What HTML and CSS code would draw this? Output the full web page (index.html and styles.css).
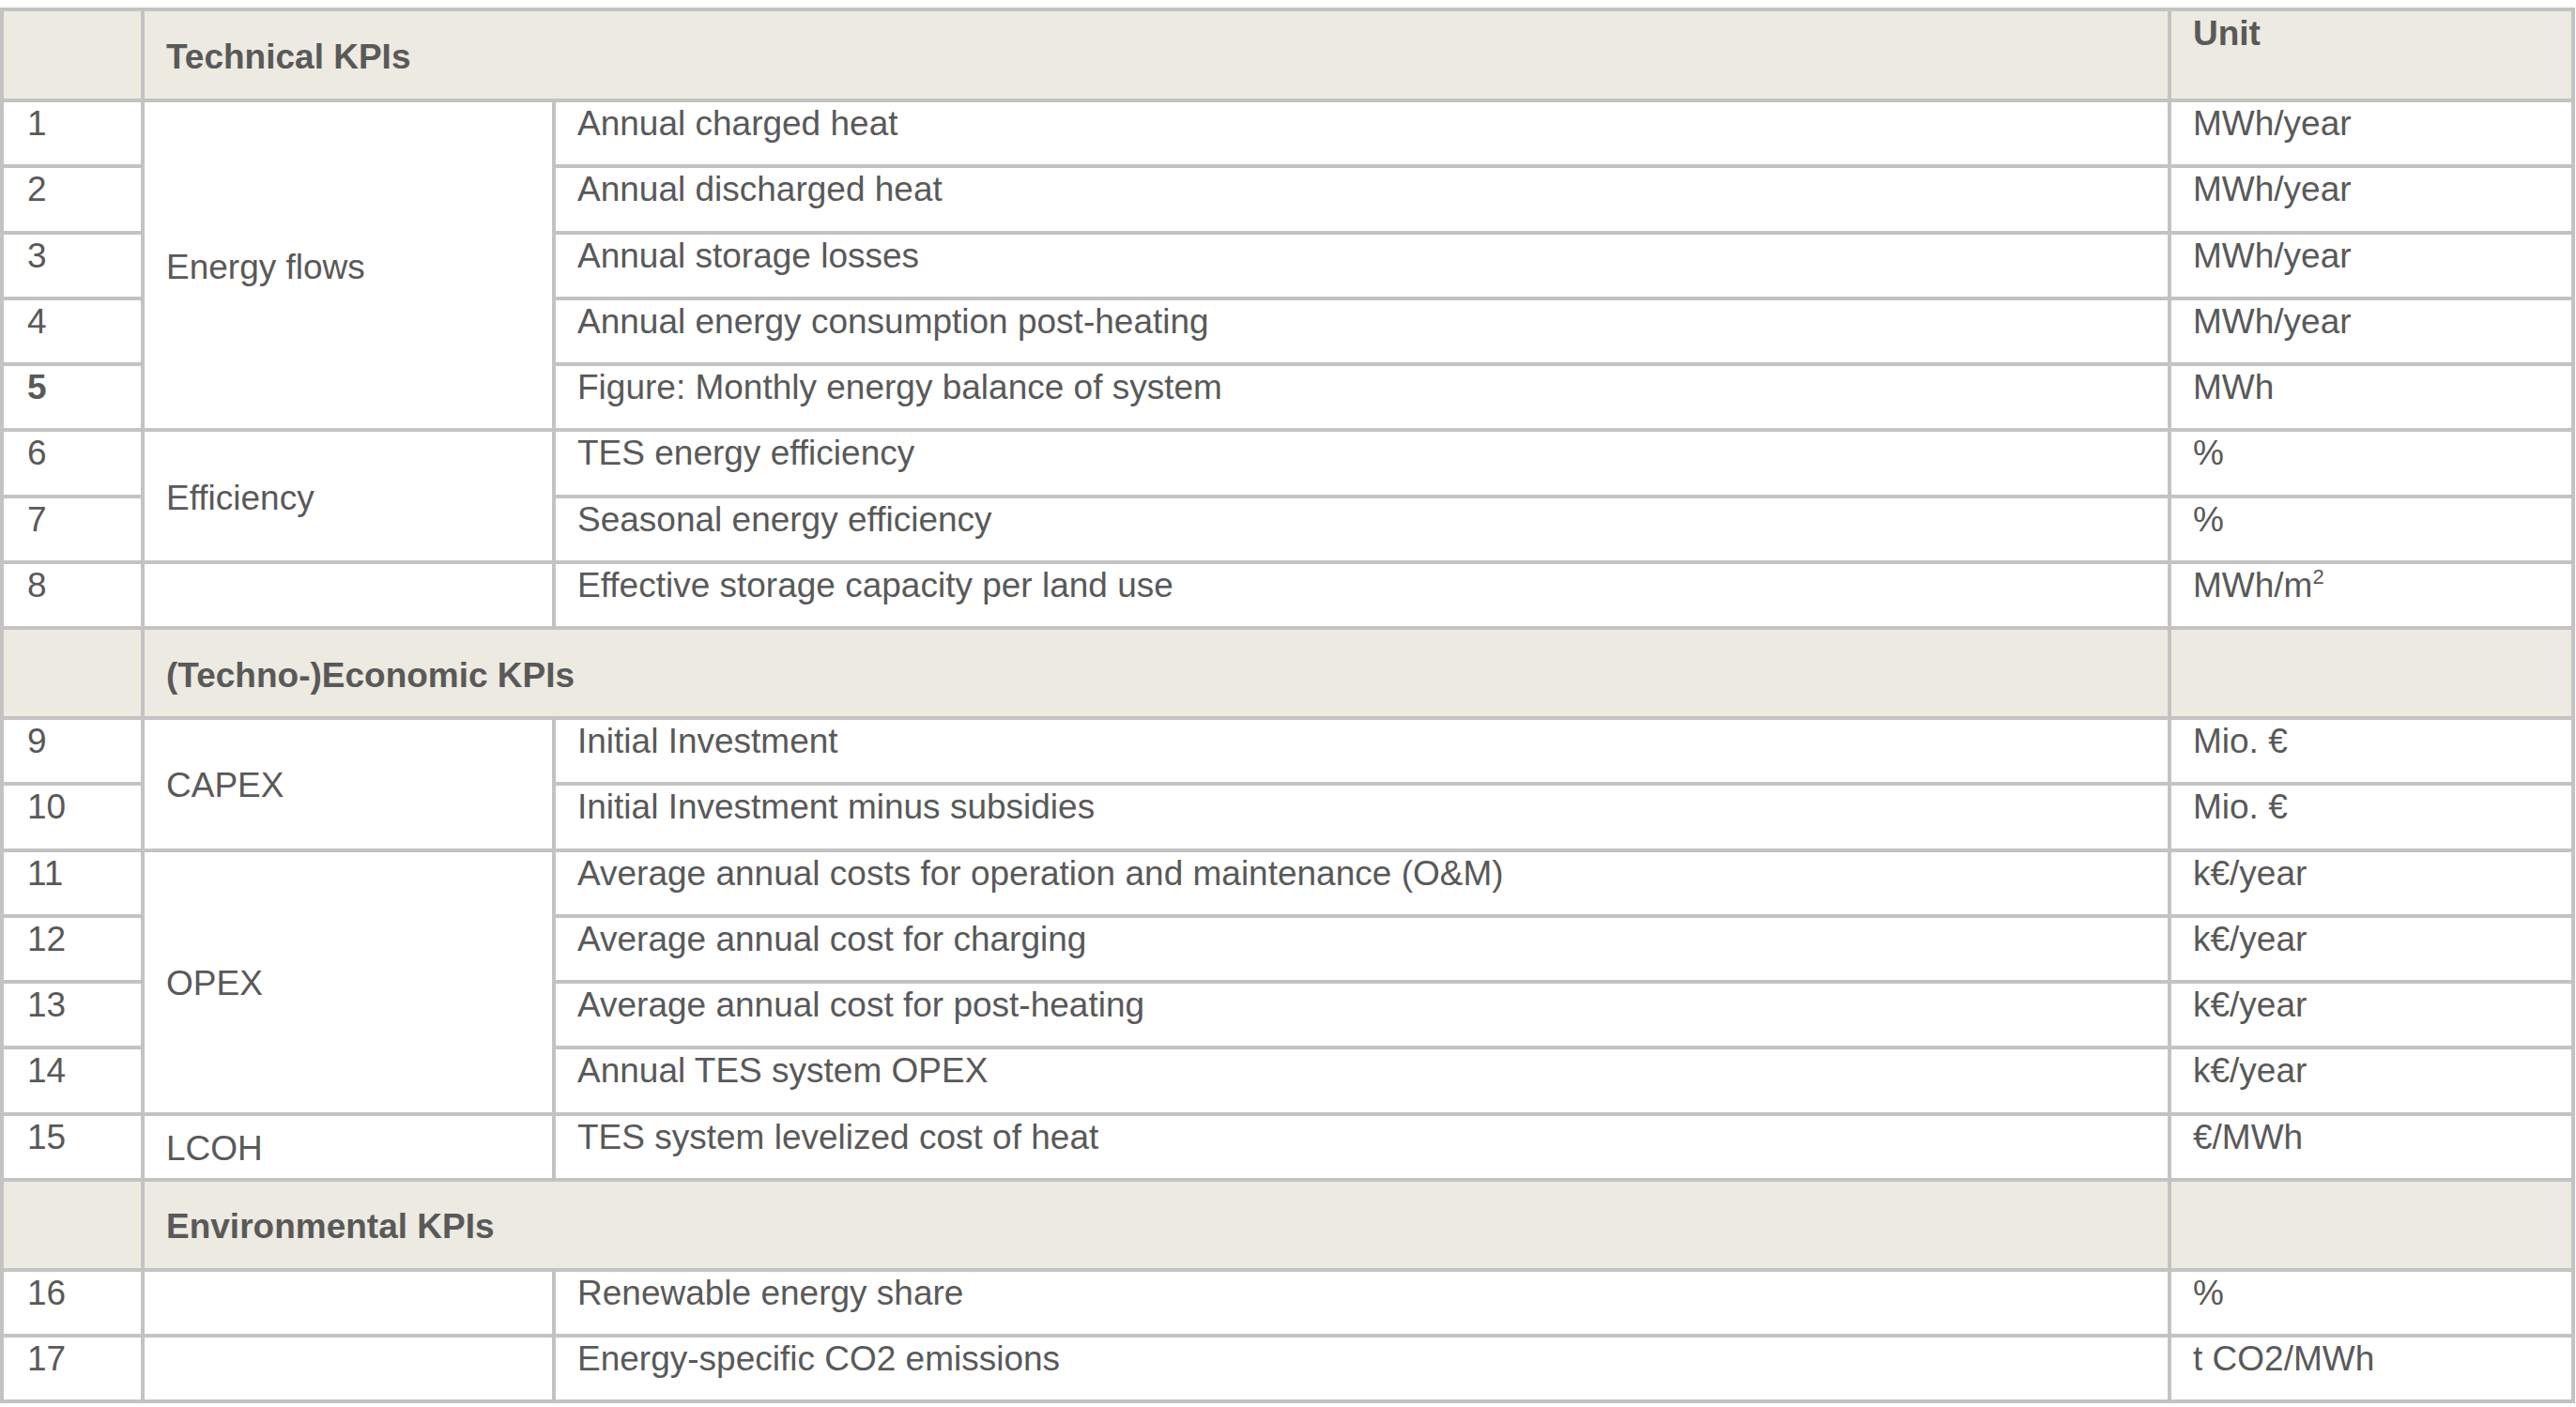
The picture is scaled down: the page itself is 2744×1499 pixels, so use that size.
FILE: index.html
```html
<!DOCTYPE html>
<html lang="en">
<head>
<meta charset="utf-8">
<title>KPIs</title>
<link rel="stylesheet" href="styles.css">
</head>
<body>
<div class="kpi-table">
  <div class="cell head"></div>
  <div class="cell head section span2">Technical KPIs</div>
  <div class="cell head unit-head">Unit</div>

  <div class="cell num">1</div>
  <div class="cell cat rows5">Energy flows</div>
  <div class="cell desc">Annual charged heat</div>
  <div class="cell unit">MWh/year</div>

  <div class="cell num">2</div>
  <div class="cell desc">Annual discharged heat</div>
  <div class="cell unit">MWh/year</div>

  <div class="cell num">3</div>
  <div class="cell desc">Annual storage losses</div>
  <div class="cell unit">MWh/year</div>

  <div class="cell num">4</div>
  <div class="cell desc">Annual energy consumption post-heating</div>
  <div class="cell unit">MWh/year</div>

  <div class="cell num bold">5</div>
  <div class="cell desc">Figure: Monthly energy balance of system</div>
  <div class="cell unit">MWh</div>

  <div class="cell num">6</div>
  <div class="cell cat rows2">Efficiency</div>
  <div class="cell desc">TES energy efficiency</div>
  <div class="cell unit">%</div>

  <div class="cell num">7</div>
  <div class="cell desc">Seasonal energy efficiency</div>
  <div class="cell unit">%</div>

  <div class="cell num">8</div>
  <div class="cell cat"></div>
  <div class="cell desc">Effective storage capacity per land use</div>
  <div class="cell unit">MWh/m<sup class="sup">2</sup></div>

  <div class="cell head"></div>
  <div class="cell head section span2">(Techno-)Economic KPIs</div>
  <div class="cell head"></div>

  <div class="cell num">9</div>
  <div class="cell cat rows2">CAPEX</div>
  <div class="cell desc">Initial Investment</div>
  <div class="cell unit">Mio. €</div>

  <div class="cell num">10</div>
  <div class="cell desc">Initial Investment minus subsidies</div>
  <div class="cell unit">Mio. €</div>

  <div class="cell num">11</div>
  <div class="cell cat rows4">OPEX</div>
  <div class="cell desc">Average annual costs for operation and maintenance (O&amp;M)</div>
  <div class="cell unit">k€/year</div>

  <div class="cell num">12</div>
  <div class="cell desc">Average annual cost for charging</div>
  <div class="cell unit">k€/year</div>

  <div class="cell num">13</div>
  <div class="cell desc">Average annual cost for post-heating</div>
  <div class="cell unit">k€/year</div>

  <div class="cell num">14</div>
  <div class="cell desc">Annual TES system OPEX</div>
  <div class="cell unit">k€/year</div>

  <div class="cell num">15</div>
  <div class="cell cat">LCOH</div>
  <div class="cell desc">TES system levelized cost of heat</div>
  <div class="cell unit">€/MWh</div>

  <div class="cell head"></div>
  <div class="cell head section span2">Environmental KPIs</div>
  <div class="cell head"></div>

  <div class="cell num">16</div>
  <div class="cell cat"></div>
  <div class="cell desc">Renewable energy share</div>
  <div class="cell unit">%</div>

  <div class="cell num">17</div>
  <div class="cell cat"></div>
  <div class="cell desc">Energy-specific CO2 emissions</div>
  <div class="cell unit">t CO2/MWh</div>
</div>
</body>
</html>
```

FILE: styles.css
```css
html, body {
  margin: 0;
  padding: 0;
  background: #ffffff;
}

body {
  padding-top: 8px;
  font-family: "Liberation Sans", Arial, sans-serif;
  color: #595959;
}

.kpi-table {
  display: grid;
  width: 2743px;
  box-sizing: border-box;
  background: #c3c3c3;
  padding: 4px;
  gap: 4px;
  grid-template-columns: 146px 434px 1717px 426px;
  grid-template-rows: 93px repeat(8, 66.25px) 92px repeat(7, 66.25px) 92px repeat(2, 66.25px);
}

.cell {
  background: #ffffff;
  font-size: 37px;
  line-height: 40px;
  padding: 3px 0 0 23px;
  white-space: nowrap;
}

.head {
  background: #eceae1;
}

.section {
  font-weight: bold;
  display: flex;
  align-items: center;
  padding-top: 5px;
}

.unit-head {
  font-weight: bold;
  padding-top: 4px;
}

.span2 {
  grid-column: span 2;
}

.num {
  padding-left: 25px;
}

.bold {
  font-weight: bold;
}

.cat {
  display: flex;
  align-items: center;
  padding-top: 4px;
}

.rows5 { grid-row: span 5; }
.rows4 { grid-row: span 4; }
.rows2 { grid-row: span 2; }

.sup {
  font-size: 22px;
  line-height: 0;
  vertical-align: 14px;
}
```
